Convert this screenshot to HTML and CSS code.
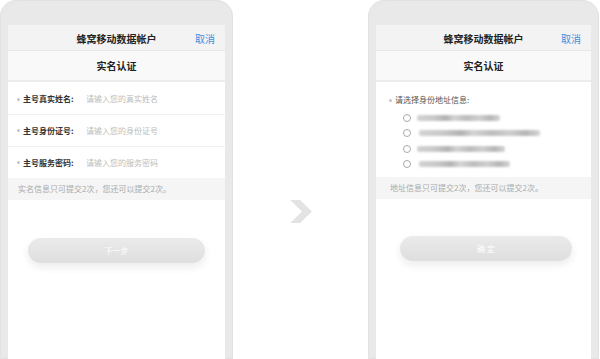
FILE: index.html
```html
<!DOCTYPE html>
<html lang="zh-CN">
<head>
<meta charset="utf-8">
<title>实名认证</title>
<link rel="stylesheet" href="styles.css">
</head>
<body>
<div class="stage">
  <div class="phone phone-left">
    <div class="screen">
      <div class="navbar">
        <span></span>
        <span class="nav-title">蜂窝移动数据帐户</span>
        <span class="nav-cancel">取消</span>
      </div>
      <div class="subbar">实名认证</div>
      <div class="form">
        <div class="row"><span class="dot"></span><span class="label">主号真实姓名:</span><span class="ph">请输入您的真实姓名</span></div>
        <div class="row"><span class="dot"></span><span class="label">主号身份证号:</span><span class="ph">请输入您的身份证号</span></div>
        <div class="row last"><span class="dot"></span><span class="label">主号服务密码:</span><span class="ph">请输入您的服务密码</span></div>
      </div>
      <div class="note">实名信息只可提交2次，您还可以提交2次。</div>
      <div class="btn-wrap btn-wrap-left"><div class="btn">下一步</div></div>
    </div>
  </div>

  <div class="arrow-area">
    <svg class="arrow" width="23" height="23" viewBox="0 0 23 23">
      <polygon points="0,0 10,0 22,11.5 10,23 0,23 12,11.5" fill="#e3e3e3"/>
    </svg>
  </div>

  <div class="phone phone-right">
    <div class="screen">
      <div class="navbar">
        <span></span>
        <span class="nav-title">蜂窝移动数据帐户</span>
        <span class="nav-cancel">取消</span>
      </div>
      <div class="subbar">实名认证</div>
      <div class="choose">
        <div class="choose-title"><span class="dot"></span><span class="label-light">请选择身份地址信息:</span></div>
        <div class="opt"><span class="radio"></span><span class="blur w1"></span></div>
        <div class="opt"><span class="radio"></span><span class="blur w2"></span></div>
        <div class="opt"><span class="radio"></span><span class="blur w3"></span></div>
        <div class="opt"><span class="radio"></span><span class="blur w4"></span></div>
      </div>
      <div class="note note-right">地址信息只可提交2次，您还可以提交2次。</div>
      <div class="btn-wrap btn-wrap-right"><div class="btn">确 定</div></div>
    </div>
  </div>
</div>
</body>
</html>
```

FILE: styles.css
```css
html, body {
  margin: 0;
  padding: 0;
  background: #ffffff;
  overflow: hidden;
  width: 600px;
  height: 359px;
  font-family: "Noto Sans CJK SC", "Noto Sans", sans-serif;
}

.stage {
  display: flex;
  align-items: flex-start;
  width: 600px;
  height: 359px;
  overflow: hidden;
}

.phone {
  background: #e9e9e9;
  border-radius: 17px 17px 0 0;
  padding: 25px 8px 0 8px;
  height: 359px;
  box-sizing: border-box;
  box-shadow: inset 0 0 0 1px #e2e2e2;
}

.phone-left {
  width: 233px;
}

.phone-right {
  width: 231px;
}

.screen {
  background: #ffffff;
  height: 100%;
}

.navbar {
  display: grid;
  grid-template-columns: 1fr auto 1fr;
  align-items: center;
  height: 26px;
  background: #f3f3f3;
  border-bottom: 1px solid #e8e8e8;
  padding-top: 2px;
  box-sizing: border-box;
}

.nav-title {
  font-size: 10px;
  font-weight: bold;
  color: #222;
  line-height: 12px;
}

.nav-cancel {
  justify-self: end;
  padding-right: 10px;
  font-size: 10px;
  color: #3d8fe0;
  line-height: 12px;
}

.subbar {
  height: 29px;
  background: #f9f9f9;
  border-bottom: 2px solid #ececec;
  text-align: center;
  font-size: 10px;
  font-weight: bold;
  color: #222;
  line-height: 29px;
}

.form {
  display: flex;
  flex-direction: column;
}

.row {
  display: flex;
  align-items: center;
  height: 32px;
  border-bottom: 1px solid #f0f0f0;
  padding-left: 9px;
  box-sizing: border-box;
}

.row:first-child {
  height: 33px;
  padding-top: 2px;
}

.row.last {
  border-bottom: none;
  height: 31px;
}

.dot {
  width: 3px;
  height: 3px;
  border-radius: 50%;
  background: #c4c4c4;
  margin-right: 3px;
  flex: none;
}

.label {
  font-size: 8px;
  font-weight: bold;
  color: #333;
  width: 63px;
  line-height: 10px;
  flex: none;
}

.ph {
  font-size: 8px;
  color: #bdbdbd;
  line-height: 10px;
}

.note {
  height: 22px;
  background: #f5f5f5;
  font-size: 8px;
  color: #aaa;
  line-height: 22px;
  padding-left: 10px;
}

.btn-wrap {
  display: flex;
  justify-content: center;
}

.btn-wrap-left {
  padding: 38px 20px 0 20px;
}

.btn-wrap-right {
  padding: 37px 19px 0 24px;
}

.btn {
  flex: 1;
  height: 25px;
  border-radius: 13px;
  background: linear-gradient(#ebebeb, #dedede);
  box-shadow: 0 4px 8px rgba(0, 0, 0, 0.08);
  color: #fff;
  font-size: 8px;
  line-height: 25px;
  text-align: center;
}

.arrow-area {
  width: 135px;
  display: flex;
  justify-content: center;
  padding-top: 200px;
  padding-left: 2px;
  box-sizing: border-box;
}

.arrow {
  display: block;
}

.choose {
  display: flex;
  flex-direction: column;
  padding: 12px 0 5px 0;
  height: 95px;
  box-sizing: border-box;
}

.choose-title {
  display: flex;
  align-items: center;
  padding-left: 13px;
  height: 12px;
  margin-bottom: 4px;
}

.label-light {
  font-size: 8px;
  color: #555;
  line-height: 10px;
}

.opt {
  display: flex;
  align-items: center;
  height: 15.5px;
  padding-left: 27px;
}

.radio {
  width: 6px;
  height: 6px;
  border: 1px solid #aaa;
  border-radius: 50%;
  margin-right: 6px;
  flex: none;
}

.blur {
  height: 6px;
  border-radius: 2px;
  filter: blur(1px);
  background: linear-gradient(90deg, #d2d2d2 0%, #c9c9c9 20%, #b3b3b3 35%, #d4d4d4 45%, #bcbcbc 60%, #cfcfcf 75%, #b6b6b6 88%, #d5d5d5 100%);
}

.w1 { width: 83px; }
.w2 { width: 121px; margin-left: 2px; }
.w3 { width: 88px; }
.w4 { width: 91px; margin-left: 2px; }

.note-right {
  padding-left: 14px;
}
```
